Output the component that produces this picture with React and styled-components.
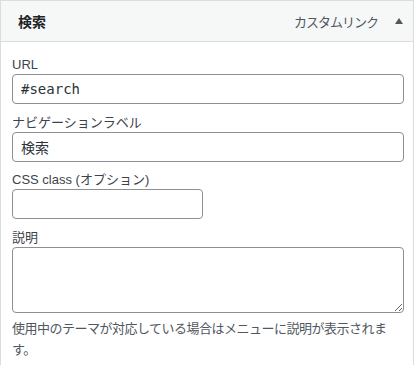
import React from 'react';
import styled, { createGlobalStyle } from 'styled-components';

const GlobalStyle = createGlobalStyle`
  html, body {
    margin: 0;
    padding: 0;
    background: #fff;
  }
  body {
    font-family: "Liberation Sans", "Noto Sans CJK JP", sans-serif;
    color: #3c434a;
  }
`;

const Panel = styled.div`
  width: 414px;
  min-height: 100vh;
  box-sizing: border-box;
  border: 1px solid #dcdcde;
  border-bottom: none;
  background: #fff;
`;

const Header = styled.div`
  height: 40px;
  display: flex;
  align-items: center;
  padding: 0 10px 0 17px;
  background: #f6f7f7;
  border-bottom: 1px solid #dcdcde;
`;

const Title = styled.div`
  flex: 1;
  font-size: 14px;
  font-weight: 700;
  color: #1d2327;
`;

const ItemType = styled.span`
  font-size: 13px;
  color: #50575e;
  letter-spacing: -1px;
`;

const Toggle = styled.span`
  margin-left: 17px;
  width: 0;
  height: 0;
  border-left: 4px solid transparent;
  border-right: 4px solid transparent;
  border-bottom: 6px solid #50575e;
`;

const Body = styled.div`
  padding: 13px 10px 10px 11px;
  display: flex;
  flex-direction: column;
  gap: 8.5px;
`;

const Field = styled.div`
  display: flex;
  flex-direction: column;
`;

const Label = styled.label`
  font-size: 13px;
  line-height: 19px;
  color: #3c434a;
`;

const Input = styled.input`
  box-sizing: border-box;
  width: ${p => p.$width || '392px'};
  height: 30px;
  margin: 0;
  padding: 0 8px;
  border: 1px solid #8c8f94;
  border-radius: 4px;
  background: #fff;
  color: #2c3338;
  font-size: ${p => (p.$code ? '14px' : '14px')};
  font-family: ${p => (p.$code
    ? '"DejaVu Sans Mono", "Liberation Mono", monospace'
    : '"Liberation Sans", "Noto Sans CJK JP", sans-serif')};
  outline: none;
`;

const TextArea = styled.textarea`
  box-sizing: border-box;
  width: 392px;
  height: 66px;
  margin: 0;
  padding: 2px 8px;
  border: 1px solid #8c8f94;
  border-radius: 4px;
  background: #fff;
  font-size: 14px;
  font-family: "Liberation Sans", "Noto Sans CJK JP", sans-serif;
  outline: none;
  display: block;
`;

const Description = styled.p`
  margin: 5px 0 0;
  font-size: 13px;
  line-height: 21px;
  letter-spacing: -0.5px;
  color: #50575e;
`;

export default function App() {
  return (
    <>
      <GlobalStyle />
      <Panel>
        <Header>
          <Title>検索</Title>
          <ItemType>カスタムリンク</ItemType>
          <Toggle />
        </Header>
        <Body>
          <Field>
            <Label>URL</Label>
            <Input $code defaultValue="#search" />
          </Field>
          <Field>
            <Label>ナビゲーションラベル</Label>
            <Input defaultValue="検索" />
          </Field>
          <Field>
            <Label>CSS class (オプション)</Label>
            <Input $width="191px" defaultValue="" />
          </Field>
          <Field>
            <Label>説明</Label>
            <TextArea defaultValue="" />
            <Description>
              使用中のテーマが対応している場合はメニューに説明が表示されます。
            </Description>
          </Field>
        </Body>
      </Panel>
    </>
  );
}
